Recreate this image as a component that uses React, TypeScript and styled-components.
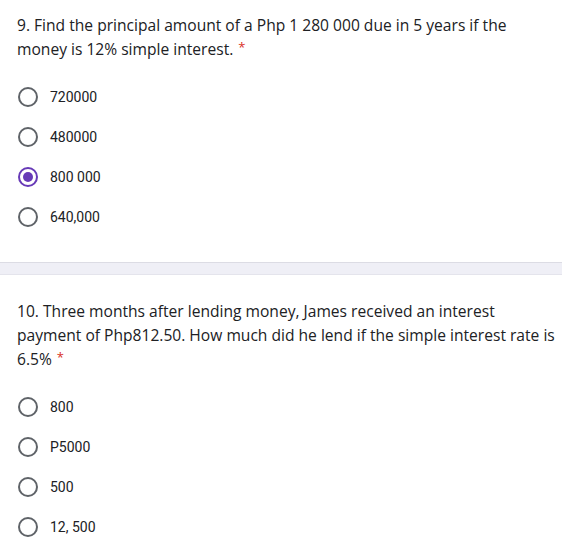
import React from 'react';
import styled, { createGlobalStyle } from 'styled-components';

const GlobalStyle = createGlobalStyle`
  html, body {
    margin: 0;
    padding: 0;
    background: #fff;
  }
`;

const Page = styled.div`
  width: 562px;
  height: 550px;
  overflow: hidden;
  background: #fff;
`;

const Card = styled.section<{ top: number; bottom: number }>`
  padding: ${({ top, bottom }) => `${top}px 0 ${bottom}px 17px`};
  background: #fff;
`;

const Separator = styled.div`
  height: 11px;
  background: #efeff6;
  border-top: 1px solid #dcdce4;
  border-bottom: 1px solid #e4e4ec;
`;

const Question = styled.div`
  font-family: 'Open Sans', 'Liberation Sans', sans-serif;
  font-size: 15.6px;
  line-height: 24px;
  color: #202124;
  white-space: nowrap;
`;

const Required = styled.span`
  display: inline-block;
  color: #d93025;
  font-size: 13px;
  line-height: 13px;
  margin-left: 5px;
  vertical-align: 3px;
`;

const Options = styled.div`
  display: flex;
  flex-direction: column;
  margin-top: 16px;
`;

const Option = styled.label`
  display: flex;
  align-items: center;
  height: 40px;
  font-family: Roboto, 'Liberation Sans', sans-serif;
  font-size: 14px;
  color: #202124;
`;

const Radio = styled.span<{ checked?: boolean }>`
  box-sizing: border-box;
  width: 20px;
  height: 20px;
  border-radius: 50%;
  margin-left: 1px;
  margin-right: 12px;
  border: 2px solid ${({ checked }) => (checked ? '#673ab7' : '#5f6368')};
  display: flex;
  align-items: center;
  justify-content: center;

  &::after {
    content: '';
    width: 10px;
    height: 10px;
    border-radius: 50%;
    background: #673ab7;
    display: ${({ checked }) => (checked ? 'block' : 'none')};
  }
`;

const questions = [
  {
    top: 13,
    bottom: 25,
    lines: [
      '9. Find the principal amount of a Php 1 280 000 due in 5 years if the',
      'money is 12% simple interest.',
    ],
    options: ['720000', '480000', '800 000', '640,000'],
    selected: 2,
  },
  {
    top: 24,
    bottom: 0,
    lines: [
      '10. Three months after lending money, James received an interest',
      'payment of Php812.50. How much did he lend if the simple interest rate is',
      '6.5%',
    ],
    options: ['800', 'P5000', '500', '12, 500'],
    selected: -1,
  },
];

export default function App() {
  return (
    <Page>
      <GlobalStyle />
      {questions.map((q, qi) => (
        <React.Fragment key={qi}>
          {qi > 0 && <Separator />}
          <Card top={q.top} bottom={q.bottom}>
            <Question>
              {q.lines.map((line, li) => (
                <div key={li}>
                  {line}
                  {li === q.lines.length - 1 && <Required>*</Required>}
                </div>
              ))}
            </Question>
            <Options>
              {q.options.map((o, oi) => (
                <Option key={oi}>
                  <Radio checked={oi === q.selected} />
                  {o}
                </Option>
              ))}
            </Options>
          </Card>
        </React.Fragment>
      ))}
    </Page>
  );
}
